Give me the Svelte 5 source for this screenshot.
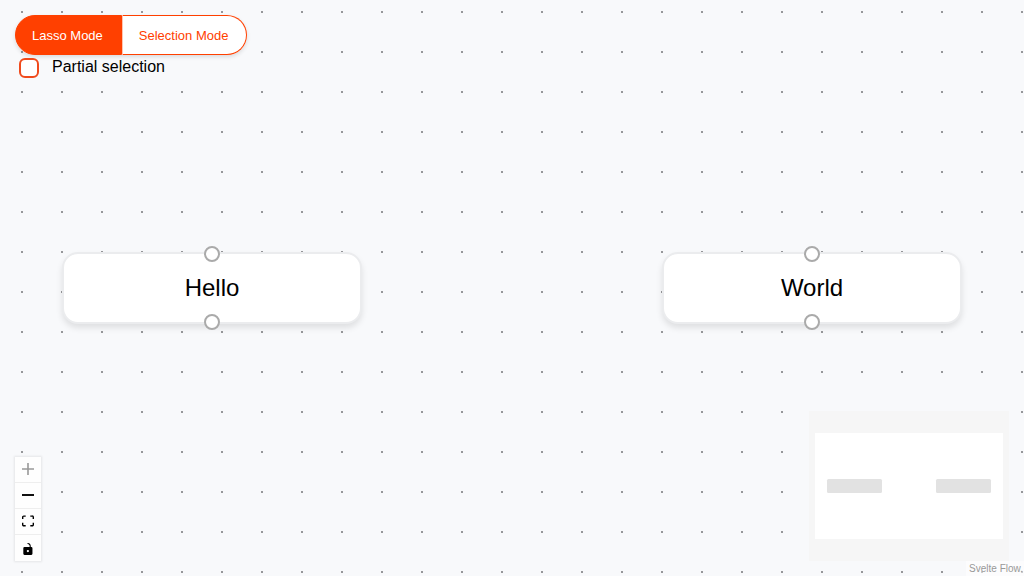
<script>
  let mode = $state('lasso');
  let partial = $state(false);

  const nodes = [
    { label: 'Hello', x: 62, y: 252 },
    { label: 'World', x: 662, y: 252 }
  ];

  const controls = [
    {
      label: 'Zoom in',
      viewBox: '0 0 32 32',
      disabled: true,
      path: 'M32 18.133H18.133V32h-4.266V18.133H0v-4.266h13.867V0h4.266v13.867H32z'
    },
    {
      label: 'Zoom out',
      viewBox: '0 0 32 5',
      path: 'M0 0h32v5H0z'
    },
    {
      label: 'Fit view',
      viewBox: '0 0 32 30',
      path: 'M3.692 4.63c0-.53.4-.938.939-.938h5.215V0H4.708C2.13 0 0 2.054 0 4.63v5.216h3.692V4.631zM27.354 0h-5.2v3.692h5.17c.53 0 .984.4.984.939v5.215H32V4.631A4.624 4.624 0 0027.354 0zm.954 24.83c0 .532-.4.94-.939.94h-5.215v3.768h5.215c2.577 0 4.631-2.13 4.631-4.707v-5.139h-3.692v5.139zm-23.677.94c-.531 0-.939-.4-.939-.94v-5.138H0v5.139c0 2.577 2.13 4.707 4.708 4.707h5.138V25.77H4.631z'
    },
    {
      label: 'Toggle interactivity',
      viewBox: '0 0 25 32',
      path: 'M21.333 10.667H19.81V7.619C19.81 3.429 16.38 0 12.19 0c-4.114 1.828-1.37 2.133.305 2.438 1.676.305 4.42 2.59 4.42 5.181v3.048H3.047A3.056 3.056 0 000 13.714v15.238A3.056 3.056 0 003.048 32h18.285a3.056 3.056 0 003.048-3.048V13.714a3.056 3.056 0 00-3.048-3.047zM12.19 24.533a3.056 3.056 0 01-3.047-3.047 3.056 3.056 0 013.047-3.048 3.056 3.056 0 013.048 3.048 3.056 3.056 0 01-3.047 3.047z'
    }
  ];
</script>

<main class="flow">
  {#each nodes as node}
    <div class="node" style="left: {node.x}px; top: {node.y}px">
      <span class="handle top"></span>
      {node.label}
      <span class="handle bottom"></span>
    </div>
  {/each}

  <div class="panel mode-panel">
    <div class="switch">
      <button type="button" class:active={mode === 'lasso'} onclick={() => (mode = 'lasso')}>Lasso Mode</button>
      <button type="button" class:active={mode === 'selection'} onclick={() => (mode = 'selection')}>Selection Mode</button>
    </div>
    <label class="partial">
      <input type="checkbox" bind:checked={partial} />
      Partial selection
    </label>
  </div>

  <div class="panel controls">
    {#each controls as control}
      <button type="button" aria-label={control.label} disabled={control.disabled}>
        <svg viewBox={control.viewBox}><path d={control.path} /></svg>
      </button>
    {/each}
  </div>

  <svg class="panel minimap" viewBox="0 0 200 150">
    <rect x="6" y="22" width="188" height="106" fill="#fff" />
    <rect x="18" y="68" width="55" height="14" rx="1.5" fill="#e2e2e2" />
    <rect x="127" y="68" width="55" height="14" rx="1.5" fill="#e2e2e2" />
  </svg>

  <a class="attribution" href="https://svelteflow.dev">Svelte Flow.</a>
</main>

<style>
  :global(body) {
    margin: 0;
  }

  .flow {
    position: relative;
    min-height: 100vh;
    overflow: hidden;
    font-family: "Liberation Sans", Arial, sans-serif;
    color: #000;
    background-color: #f8f9fb;
    background-image: conic-gradient(from 90deg at 38px 38px, #96979a 90deg, transparent 0);
    background-size: 40px 40px;
    background-position: 23px 13px;
  }

  .node {
    position: absolute;
    box-sizing: border-box;
    width: 300px;
    padding: 20px;
    border: 2px solid #ebecee;
    border-radius: 16px;
    background: #fff;
    box-shadow: 0 4px 6px rgba(0, 0, 0, 0.1);
    font-size: 24px;
    line-height: 28px;
    text-align: center;
  }

  .handle {
    position: absolute;
    left: 50%;
    box-sizing: border-box;
    width: 16px;
    height: 16px;
    border: 2px solid #aaa;
    border-radius: 50%;
    background: #fff;
  }

  .handle.top {
    top: 0;
    transform: translate(-50%, -50%);
  }

  .handle.bottom {
    bottom: 0;
    transform: translate(-50%, 50%);
  }

  .panel {
    position: absolute;
  }

  .mode-panel {
    top: 15px;
    left: 15px;
  }

  .switch {
    display: flex;
    border-radius: 20px;
    box-shadow: 0 2px 4px rgba(0, 0, 0, 0.12);
  }

  .switch button {
    box-sizing: border-box;
    height: 40px;
    padding: 2px 18px 0 16px;
    border: 1px solid #ff4000;
    background: #fff;
    color: #ff4000;
    font-family: inherit;
    font-size: 13px;
    line-height: 16px;
  }

  .switch button:first-child {
    border-radius: 20px 0 0 20px;
  }

  .switch button:last-child {
    border-left-color: #ffc4b0;
    border-radius: 0 20px 20px 0;
  }

  .switch button.active {
    background: #ff4000;
    color: #fff;
  }

  .partial {
    display: flex;
    align-items: flex-start;
    gap: 13px;
    padding: 3px 4px;
    font-size: 16px;
    line-height: 18px;
  }

  .partial input {
    appearance: none;
    box-sizing: border-box;
    width: 20px;
    height: 20px;
    margin: 0;
    border: 2px solid #f04a1c;
    border-radius: 6px;
    background: #fff;
  }

  .partial input:checked {
    background: #ff4000;
  }

  .controls {
    bottom: 15px;
    left: 15px;
    display: flex;
    flex-direction: column;
    box-shadow: 0 0 2px 1px rgba(0, 0, 0, 0.08);
  }

  .controls button {
    display: flex;
    align-items: center;
    justify-content: center;
    box-sizing: border-box;
    width: 26px;
    height: 26px;
    padding: 4px 4px 5px;
    border: 0;
    border-bottom: 1px solid #eee;
    background: #fefefe;
  }

  .controls button:last-child {
    padding: 5px 4px 4px;
    border-bottom: 0;
  }

  .controls svg {
    width: 12px;
    height: 12px;
  }

  .controls button:disabled svg {
    fill-opacity: 0.4;
  }

  .minimap {
    right: 15px;
    bottom: 15px;
    width: 200px;
    height: 150px;
    background: #f6f6f6;
  }

  .attribution {
    position: absolute;
    right: 0;
    bottom: 0;
    padding: 2px 1px 2px 3px;
    background: rgba(255, 255, 255, 0.5);
    color: #999;
    font-size: 10px;
    line-height: 11px;
    text-decoration: none;
  }
</style>
